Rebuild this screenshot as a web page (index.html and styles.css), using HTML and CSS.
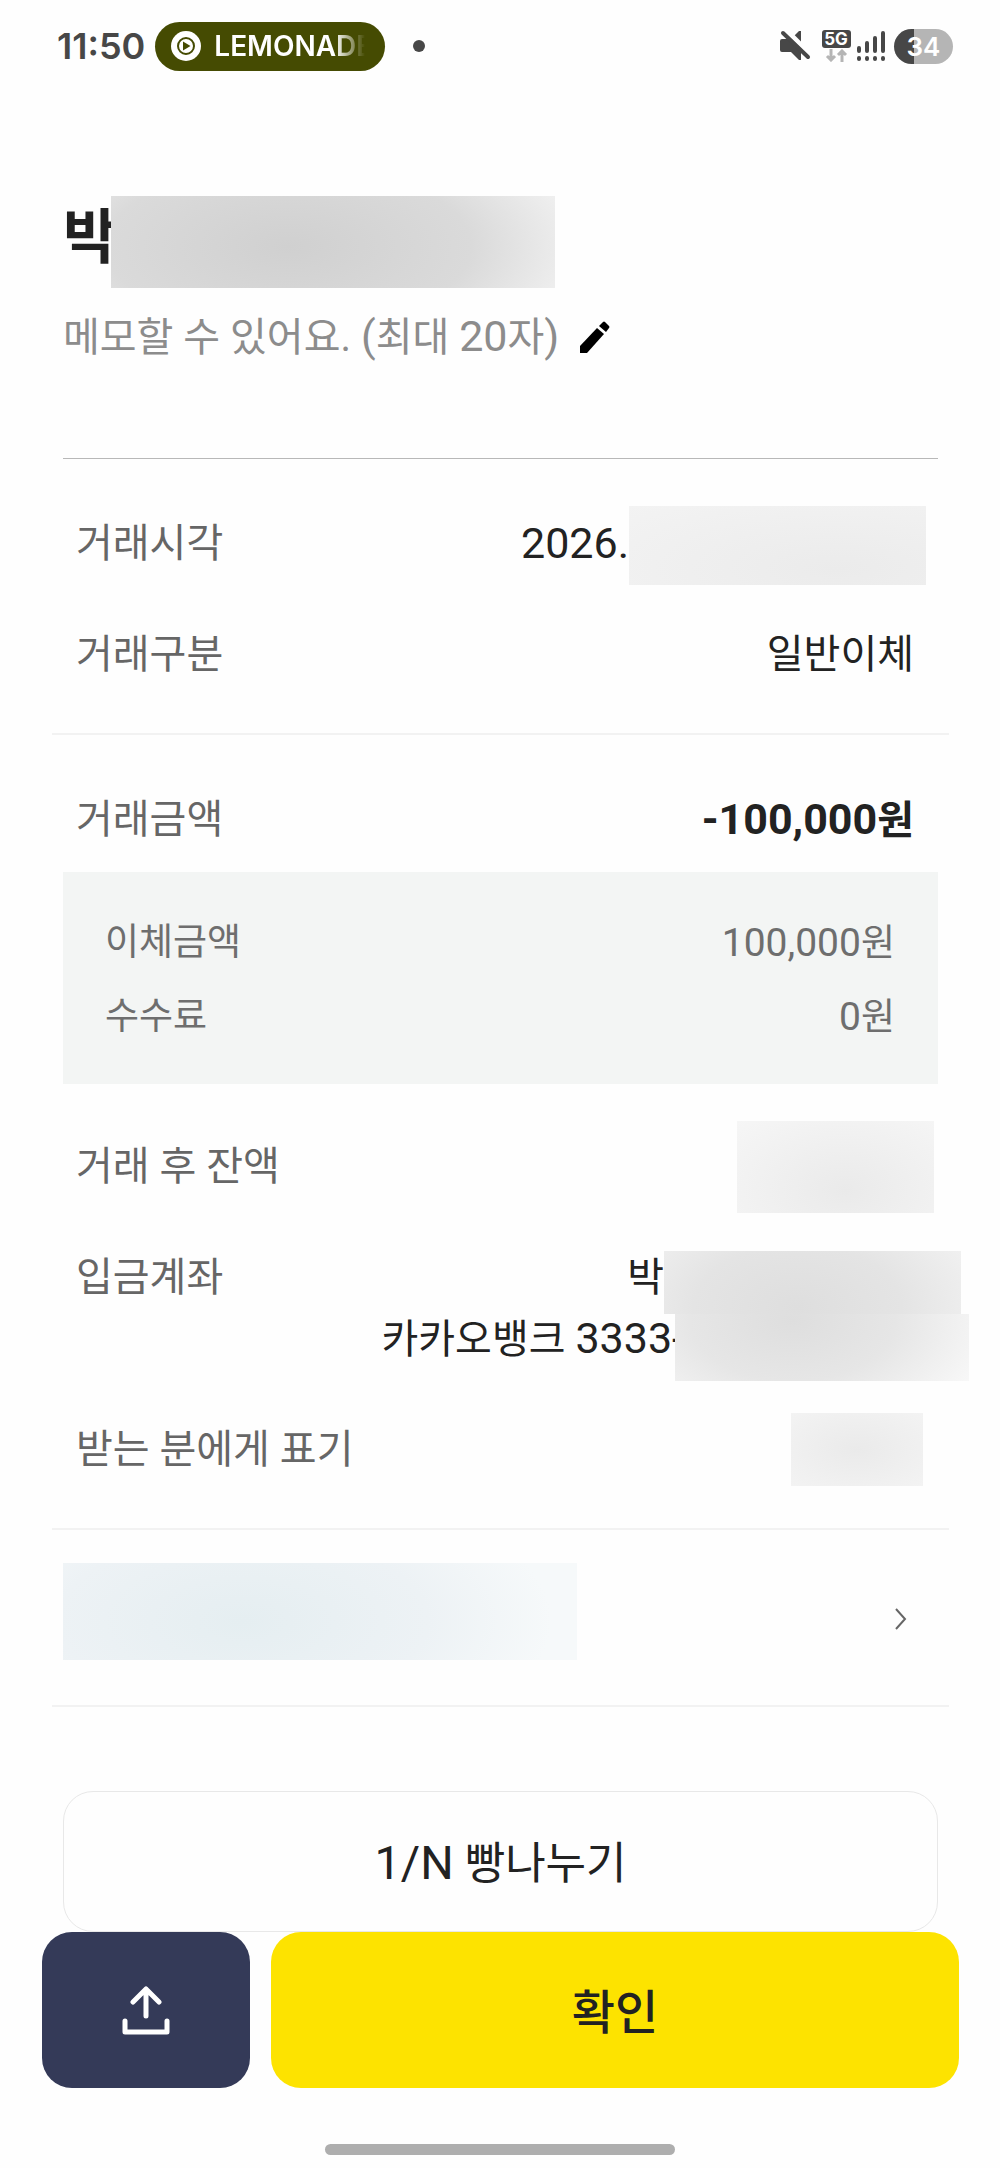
FILE: index.html
```html
<!DOCTYPE html>
<html lang="ko">
    <head>
        <meta charset="UTF-8">
        <meta name="viewport" content="width=device-width, initial-scale=1.0">
        <title>거래내역 상세</title>
        <link rel="stylesheet" href="styles.css">
    </head>
    <body>
        <div class="statusbar">
            <span class="time">11:50</span>
            <div class="nowplaying">
                <svg width="30" height="30" viewBox="0 0 30 30">
                    <circle cx="15" cy="15" r="15" fill="#fff"/>
                    <circle cx="15" cy="15" r="8" fill="none" stroke="#454b02" stroke-width="2"/>
                    <path d="M12 10.5v9l7.500-4.500z" fill="#454b02"/>
                </svg>
                <span class="song">LEMONADE</span>
            </div>
            <span class="dot"></span>
            <div class="icons">
                <svg class="mute" width="32" height="32" viewBox="0 0 32 32">
                    <path d="M3 9h9L20 1h2v29h-2l-8-8H3q-2 0-2-2v-9q0-2 2-2z" fill="#474747"/>
                    <path d="M7 0L33 26" stroke="#fefefe" stroke-width="5"/>
                    <path d="M4 3L29 27" stroke="#474747" stroke-width="4" stroke-linecap="round"/>
                </svg>
                <div class="network">
                    <span>5G</span>
                    <svg width="24" height="13" viewBox="0 0 24 13" fill="none" stroke="#b5b5b5" stroke-width="3">
                        <path d="M7 0v11M3 7l4 4 4-4M18 13V2M14 6l4-4 4 4"/>
                    </svg>
                </div>
                <svg class="signal" width="30" height="32" viewBox="0 0 30 32" stroke="#474747" stroke-width="4" stroke-linecap="round">
                    <path d="M3 18v3M11 13v8M19 8v13M27 3v18M3 28v1M11 28v1M19 28v1M27 28v1"/>
                </svg>
                <span class="battery">34</span>
            </div>
        </div>

        <div class="header">
            <h1>박<span class="mask mask-name"></span></h1>
            <div class="memo">
                <p>메모할 수 있어요. <span class="num">(</span>최대 <span class="num">20</span>자<span class="num">)</span></p>
                <button aria-label="메모 수정">
                    <svg width="32" height="34" viewBox="0 0 32 34">
                        <path d="M1 26L18 8l7 6L8 33H1z"/>
                        <path d="M20 6l4-4q1-1 2 0l4 4q1 1 0 2l-3 4z"/>
                    </svg>
                </button>
            </div>
        </div>

        <dl class="section">
            <div class="row">
                <dt>거래시각</dt>
                <dd><span class="num">2026.</span><span class="mask mask-time"></span></dd>
            </div>
            <div class="row">
                <dt>거래구분</dt>
                <dd>일반이체</dd>
            </div>
        </dl>

        <dl class="section">
            <div class="row">
                <dt>거래금액</dt>
                <dd class="amount"><span class="num">-100,000</span>원</dd>
            </div>
            <div class="box">
                <div class="boxrow">
                    <span>이체금액</span>
                    <span><span class="num">100,000</span>원</span>
                </div>
                <div class="boxrow">
                    <span>수수료</span>
                    <span><span class="num">0</span>원</span>
                </div>
            </div>
            <div class="row">
                <dt>거래 후 잔액</dt>
                <dd><span class="mask mask-balance"></span></dd>
            </div>
            <div class="row">
                <dt>입금계좌</dt>
                <dd class="account">
                    <div class="line">박<span class="mask mask-owner"></span></div>
                    <div class="line"><span>카카오뱅크 <span class="num">3333-</span></span><span class="mask mask-number"></span></div>
                </dd>
            </div>
            <div class="row">
                <dt>받는 분에게 표기</dt>
                <dd><span class="mask mask-label"></span></dd>
            </div>
        </dl>

        <a class="banner" href="#" aria-label="더보기">
            <span class="mask mask-banner"></span>
            <svg width="12" height="22" viewBox="0 0 12 22" fill="none" stroke="#666" stroke-width="2">
                <path d="M1 1l9 10-9 10"/>
            </svg>
        </a>

        <button class="split"><span class="num">1/N</span> 빵나누기</button>

        <div class="actions">
            <button class="share" aria-label="공유">
                <svg width="48" height="50" viewBox="0 0 48 50" fill="none" stroke="#fff" stroke-width="5" stroke-linecap="round" stroke-linejoin="round">
                    <path d="M24 31V4M11 17L24 4l13 13M3 36v11h42V36"/>
                </svg>
            </button>
            <button class="confirm">확인</button>
        </div>
        <div class="handle"></div>
    </body>
</html>
```
FILE: styles.css
```css
*{
    margin: 0;
    padding: 0;
    box-sizing: border-box;
}
body{
    background-color: #fefefe;
    color: #222;
    font-family: Roboto, "Noto Sans CJK KR", sans-serif;
    font-size: 40px;
    line-height: 61px;
}
button{
    border: 0;
    background: none;
    font-family: inherit;
    color: inherit;
    cursor: pointer;
}
svg{
    display: block;
    flex: none;
}
.num{
    font-size: 43px;
}

/* status bar */
.statusbar{
    height: 92px;
    padding: 0 47px 0 57px;
    display: flex;
    align-items: center;
    font-family: Inter, sans-serif;
}
.time{
    font-size: 36px;
    font-weight: 600;
    color: #474747;
}
.nowplaying{
    width: 230px;
    height: 49px;
    margin-left: 10px;
    padding: 0 20px 0 16px;
    display: flex;
    align-items: center;
    gap: 13px;
    background-color: #454b02;
    border-radius: 25px;
    color: #fff;
}
.song{
    flex: 1;
    overflow: hidden;
    font-size: 28px;
    font-weight: 600;
    -webkit-mask-image: linear-gradient(90deg, #000 80%, transparent);
    mask-image: linear-gradient(90deg, #000 80%, transparent);
}
.dot{
    width: 12px;
    height: 12px;
    margin-left: 28px;
    border-radius: 50%;
    background-color: #474747;
}
.icons{
    margin-left: auto;
    display: flex;
    align-items: center;
}
.network{
    width: 30px;
    margin: 0 5px 0 10px;
    display: flex;
    flex-direction: column;
    align-items: center;
    gap: 1px;
}
.network span{
    width: 29px;
    height: 18px;
    border-radius: 3px;
    background-color: #474747;
    color: #fff;
    font-size: 17px;
    font-weight: 700;
    line-height: 18px;
    text-align: center;
}
.battery{
    width: 59px;
    height: 35px;
    margin-left: 8px;
    border-radius: 18px;
    background: linear-gradient(90deg, #474747 34%, #b5b5b5 34%);
    color: #fff;
    font-size: 26px;
    font-weight: 600;
    line-height: 35px;
    text-align: center;
}

/* hidden values */
.mask{
    display: block;
    flex: none;
    background-color: #efefef;
}
.mask-name{
    width: 444px;
    height: 92px;
    background: radial-gradient(ellipse 75% 160% at 40% 55%, #d0d0d0, #dadada 55%, #f0f0f0 88%, #f7f7f7);
}
.mask-time{
    width: 297px;
    height: 79px;
    margin: 4px -12px 0 0;
    background: radial-gradient(ellipse at 70% 80%, #ebebeb, #f3f3f3);
}
.mask-balance{
    width: 197px;
    height: 92px;
    margin-right: -20px;
    background: radial-gradient(ellipse at 55% 75%, #eaeaea, #f6f6f6);
}
.mask-owner{
    width: 297px;
    height: 63px;
    margin: 4px -47px 0 0;
    background: radial-gradient(ellipse 70% 200% at 45% 90%, #dedede, #e4e4e4 50%, #f3f3f3);
}
.mask-number{
    width: 294px;
    height: 67px;
    margin: 6px -55px 0 -9px;
    background: radial-gradient(ellipse 70% 180% at 40% 10%, #dedede, #e6e6e6 50%, #f8f8f8);
}
.mask-label{
    width: 132px;
    height: 73px;
    margin-right: -9px;
    background: radial-gradient(ellipse at 50% 50%, #eaeaea, #f3f3f3);
}
.mask-banner{
    width: 514px;
    height: 97px;
    background: radial-gradient(ellipse 60% 150% at 35% 60%, #e5eef1, #edf2f5 60%, #f6f9fa);
}

/* name and memo */
.header{
    margin: 0 62px 0 63px;
    padding: 104px 0 90px;
    border-bottom: 1px solid #b8b8b8;
}
h1{
    display: flex;
    font-size: 59px;
    font-weight: 700;
    line-height: 84px;
}
h1 .mask{
    margin-left: -6px;
}
.memo{
    margin-top: 18px;
    display: flex;
    align-items: center;
    gap: 20px;
    color: #8c8c8c;
}

/* transaction rows */
.section{
    margin: 0 51px 0 52px;
    padding: 29px 0 23px;
    border-bottom: 2px solid #f2f2f2;
}
.row{
    min-height: 111px;
    padding: 0 35px 0 24px;
    display: flex;
    justify-content: space-between;
    align-items: center;
}
.row dt{
    align-self: flex-start;
    margin-top: 25px;
    color: #666;
}
.row dd{
    display: flex;
    align-items: center;
}
.row .amount{
    display: block;
    font-weight: 700;
}
.row .account{
    display: block;
    padding: 25px 0;
}
.line{
    height: 61px;
    display: flex;
    justify-content: flex-end;
    align-items: flex-start;
}
.box{
    margin: -3px 11px 27px;
    padding: 34px 43px 30px 42px;
    background-color: #f3f5f4;
    color: #6e6e6e;
    font-size: 37px;
    line-height: 74px;
}
.box .num{
    font-size: 39px;
}
.boxrow{
    height: 74px;
    display: flex;
    justify-content: space-between;
}

.banner{
    height: 177px;
    margin: 0 51px 0 52px;
    padding: 33px 42px 0 11px;
    display: flex;
    justify-content: space-between;
    border-bottom: 2px solid #f2f2f2;
}
.banner svg{
    margin-top: 45px;
}

/* buttons */
.split{
    display: block;
    width: calc(100% - 125px);
    height: 141px;
    margin: 84px 62px 0 63px;
    padding-bottom: 4px;
    border: 1px solid #e8e8e8;
    border-radius: 30px;
    font-size: 44px;
}
.split .num{
    font-size: 47px;
}
.actions{
    padding: 0 41px 0 42px;
    display: flex;
    gap: 21px;
}
.actions button{
    height: 156px;
    border-radius: 30px;
}
.share{
    width: 208px;
    display: flex;
    align-items: center;
    justify-content: center;
    background-color: #343a58;
}
.confirm{
    flex: 1;
    padding-bottom: 4px;
    background-color: #fde300;
    font-size: 47px;
    font-weight: 500;
}
.handle{
    width: 35%;
    height: 11px;
    margin: 56px auto 14px;
    border-radius: 6px;
    background-color: #aeaeae;
}
```
